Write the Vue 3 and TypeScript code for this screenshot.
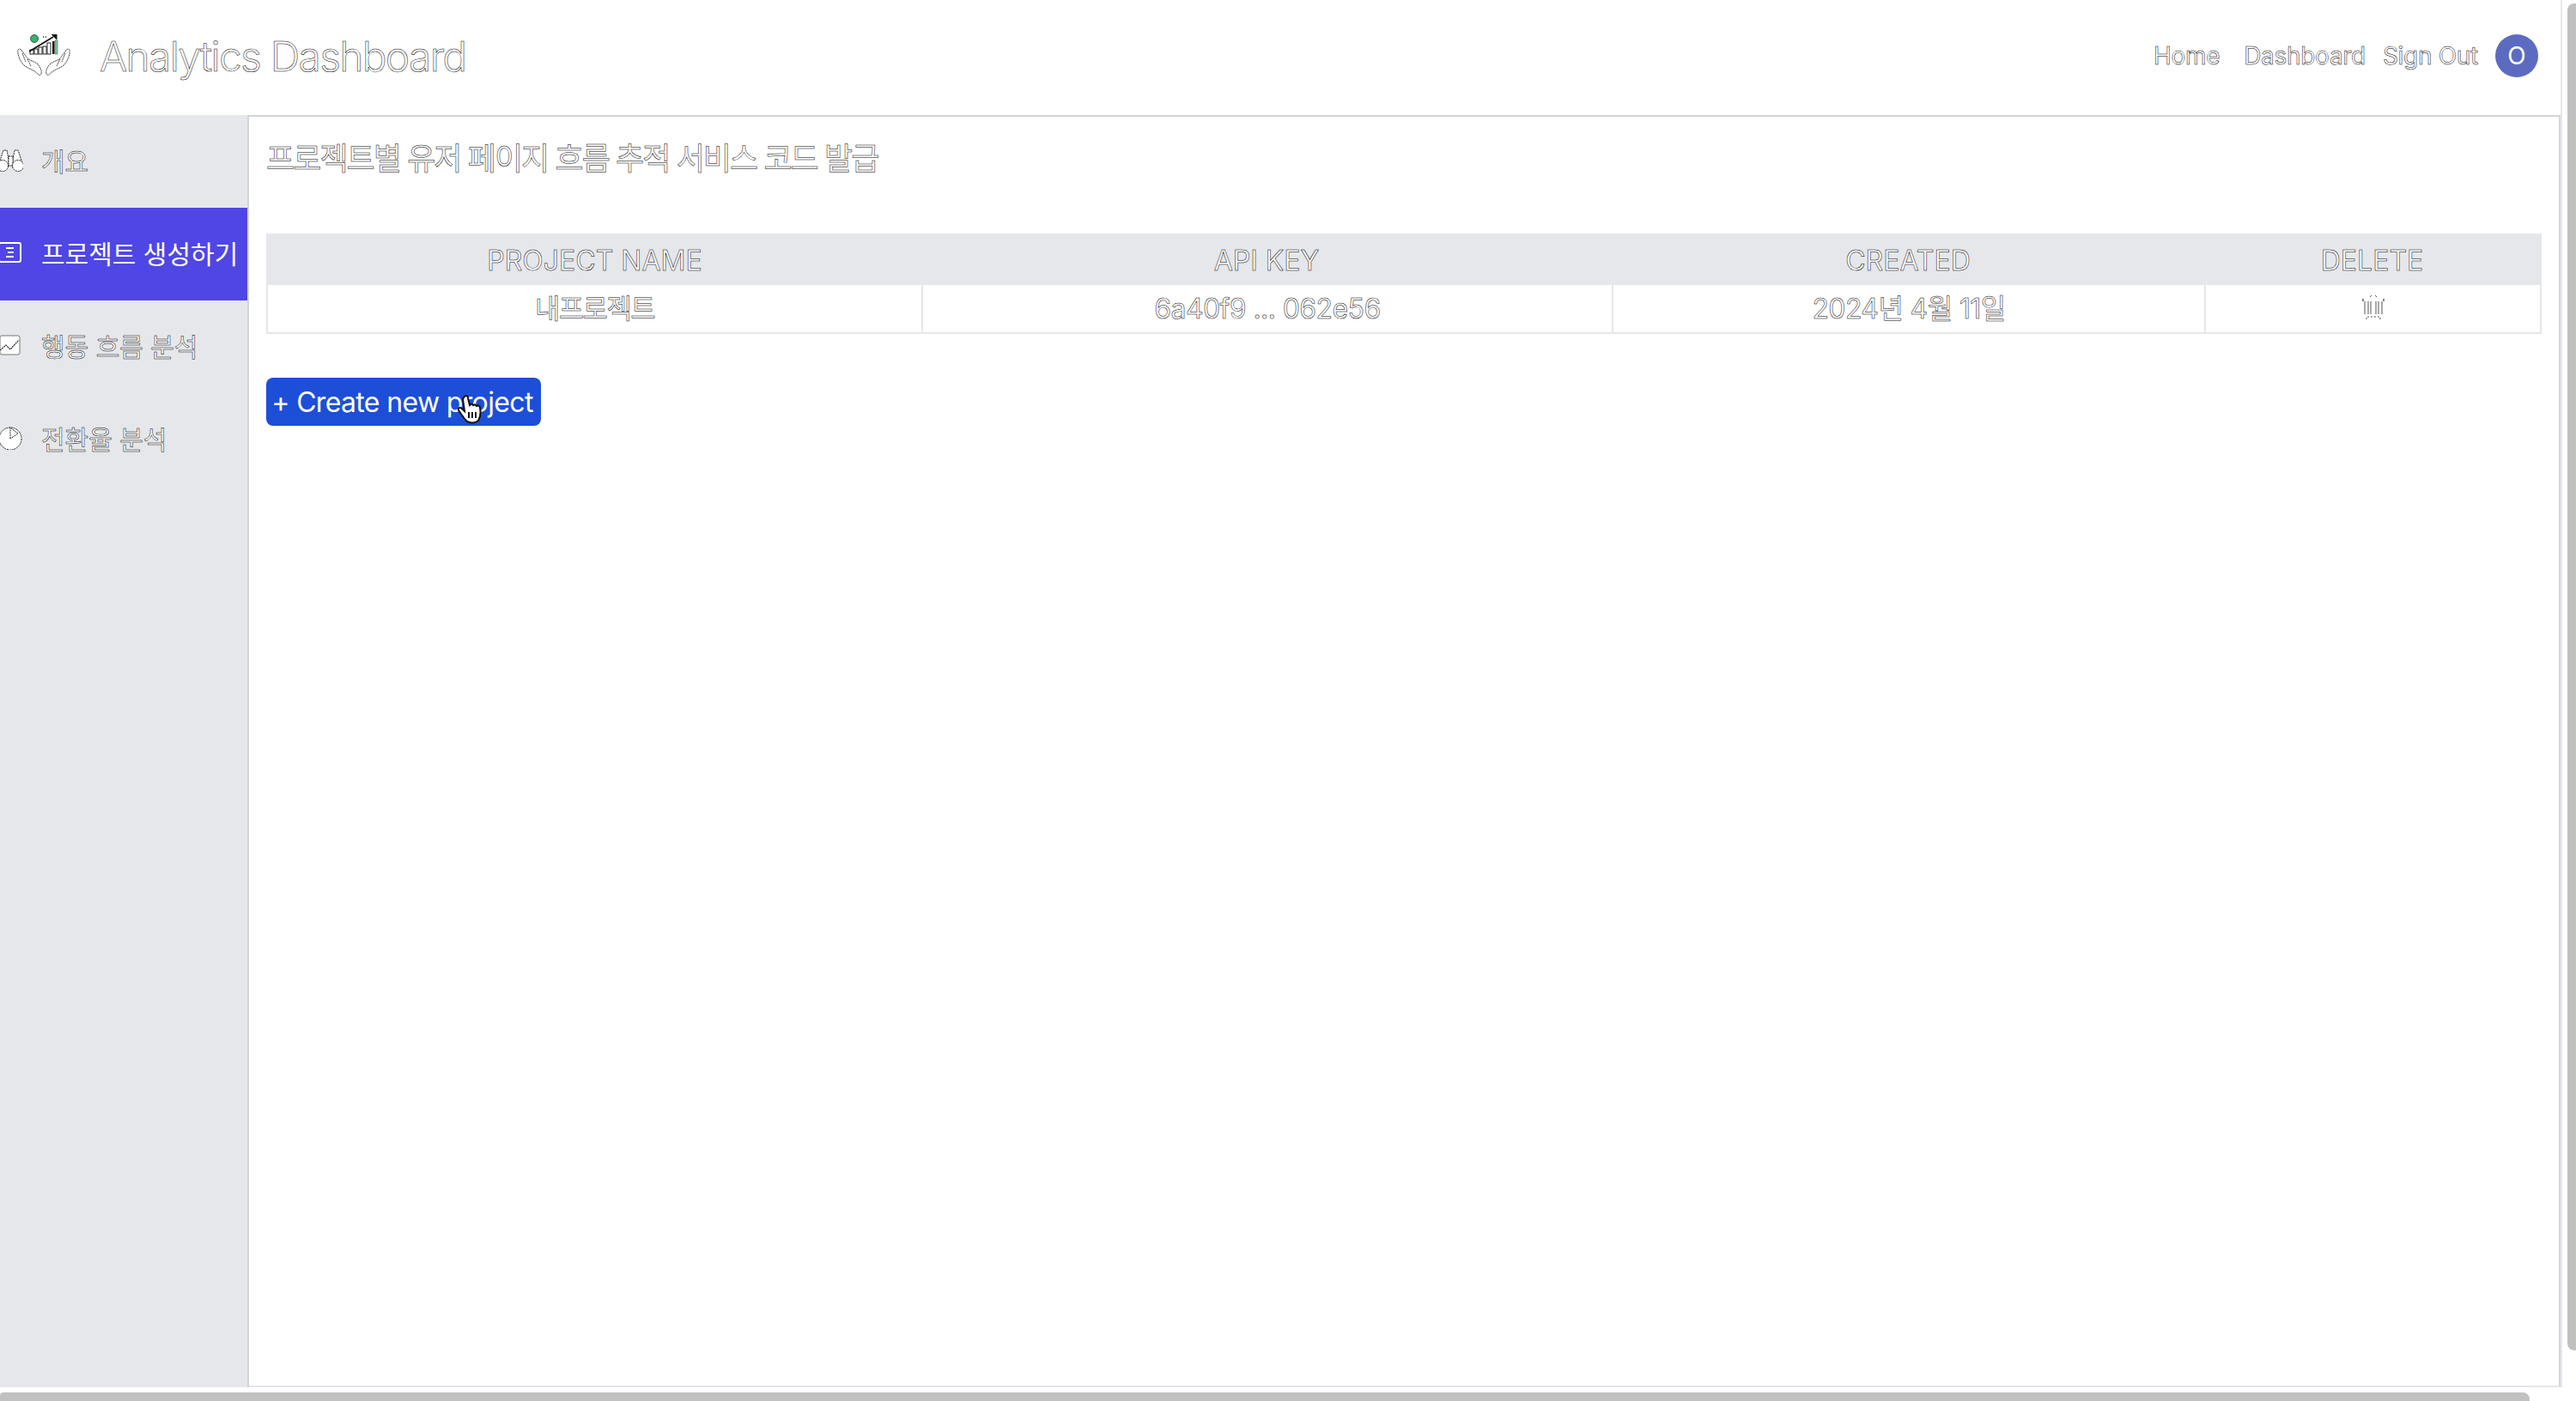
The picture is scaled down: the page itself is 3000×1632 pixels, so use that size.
<script setup lang="ts">
interface NavItem {
  label: string
  icon: string
  active?: boolean
}

const topLinks = ['Home', 'Dashboard', 'Sign Out']

const navItems: NavItem[] = [
  { label: '개요', icon: 'binoculars' },
  { label: '프로젝트 생성하기', icon: 'list', active: true },
  { label: '행동 흐름 분석', icon: 'chart' },
  { label: '전환율 분석', icon: 'pie' }
]

const columns = ['Project Name', 'API Key', 'Created', 'Delete']
</script>

<template>
  <div class="shell">
    <header class="topbar">
      <div class="brand">
        <svg class="logo" viewBox="0 0 62 50" width="62" height="50">
          <circle cx="20" cy="5" r="4.5" fill="#35b56f" stroke="#222" stroke-width="0.7" />
          <path d="M30 3h1M33 3h1" stroke="#222" stroke-width="1.4" />
          <g fill="#fff" stroke="#111" stroke-width="0.9">
            <rect x="15" y="18" width="4" height="5" />
            <rect x="20" y="17" width="4" height="6" />
            <rect x="25" y="15" width="4" height="8" />
            <rect x="30" y="14" width="4" height="9" />
            <rect x="35" y="10" width="4" height="13" />
            <path d="M14 20L42 3" fill="none" stroke-width="1.8" />
            <path d="M40 0h6v6z" fill="#111" />
          </g>
          <path d="M41 8h2.5v15H41z" fill="#111" />
          <path d="M44 7h3v16h-3z" fill="#7fcf9e" stroke="#333" stroke-width="0.5" />
          <g fill="#fff" stroke="#111" stroke-width="0.9" stroke-dasharray="1.6 0.8" transform="translate(0 -2)">
            <path d="M1 20c2-2 4 0 5 2l7 9c3 2 9 3 12 7 2 3 4 6 3 10-1 2-3 2-4 0-4-4-10-6-15-9C4 35 0 26 1 20z" />
            <path d="M61 20c-2-2-4 0-5 2l-7 9c-3 2-9 3-12 7-2 3-4 6-3 10 1 2 3 2 4 0 4-4 10-6 15-9 5-4 9-13 8-19z" />
            <path d="M6 24l4 10M12 31l4 8M56 24l-4 10M50 31l-4 8" fill="none" />
          </g>
        </svg>
        <span class="brand-name">Analytics Dashboard</span>
      </div>
      <nav class="top-links">
        <a v-for="link in topLinks" :key="link" class="top-link">{{ link }}</a>
        <div class="avatar">O</div>
      </nav>
    </header>

    <div class="body">
      <aside class="sidebar">
        <div
          v-for="item in navItems"
          :key="item.label"
          class="side-item"
          :class="{ active: item.active }"
        >
          <svg class="side-icon" viewBox="0 0 28 28" width="28" height="28">
            <g v-if="item.icon === 'binoculars'" fill="#fff" stroke="#222" stroke-width="1" stroke-dasharray="2 0.8">
              <path d="M0 18L5 3h4l2 10v9H0z" />
              <path d="M16 22v-9l2-10h4l5 15v4z" />
              <path d="M11 10h5v11h-5z" />
              <circle cx="4" cy="21" r="6.5" />
              <circle cx="22" cy="21" r="6.5" />
            </g>
            <g v-else-if="item.icon === 'list'" fill="none" stroke="#fff" stroke-width="2">
              <rect x="0" y="3" width="25" height="22" rx="2" />
              <path d="M8 9h9M10 14h7M8 19h9" />
            </g>
            <g v-else-if="item.icon === 'chart'">
              <rect x="1" y="3" width="23" height="22" rx="2" fill="#fff" stroke="#777" stroke-width="1" />
              <path d="M1 20l7-6 5 5 10-11" fill="none" stroke="#222" stroke-width="1.2" stroke-dasharray="2 0.8" />
            </g>
            <g v-else fill="#fff" stroke="#222" stroke-width="1" stroke-dasharray="2 0.8">
              <circle cx="13" cy="15" r="13" />
              <path d="M13 15V2l9 7z" />
            </g>
          </svg>
          <span class="side-label">{{ item.label }}</span>
        </div>
      </aside>

      <main class="content">
        <h1 class="page-title">프로젝트별 유저 페이지 흐름 추적 서비스 코드 발급</h1>

        <table class="project-table">
          <colgroup>
            <col class="col-name" />
            <col class="col-key" />
            <col class="col-created" />
            <col class="col-delete" />
          </colgroup>
          <thead>
            <tr>
              <th v-for="col in columns" :key="col">{{ col }}</th>
            </tr>
          </thead>
          <tbody>
            <tr>
              <td class="name-cell">내프로젝트</td>
              <td>6a40f9 ... 062e56</td>
              <td class="date-cell">2024년 4월 11일</td>
              <td>
                <svg class="trash" viewBox="0 0 26 30" width="26" height="30">
                  <g fill="none" stroke="#555" stroke-width="1">
                    <path d="M9 3l2-2M17 3l-2-2" />
                    <path d="M1 5v3M25 5v3" stroke-width="1.4" />
                    <path d="M3 8v15M7 8v15M10 8v15M16 8v15M19 8v15M23 8v15" />
                    <path d="M5 29v-3h16v3" stroke-dasharray="2 2" />
                  </g>
                </svg>
              </td>
            </tr>
          </tbody>
        </table>

        <div class="actions">
          <button class="create-btn">+ Create new project</button>
          <svg class="hand-cursor" viewBox="0 0 30 34" width="30" height="34">
            <path
              d="M8 2c2-2 4-1 4 2l2 8c2-2 3-1 4 0 2-1 3-1 4 1 2-1 4 0 4 2 1 5 1 10-2 15-4 3-9 3-13 1C7 27 4 22 1 18c-1-3 2-4 4-2l3 3L6 5c0-1 1-2 2-3z"
              fill="#fff"
              stroke="#111"
              stroke-width="2"
            />
            <path d="M13 20v7M17 20v7M21 20v7" stroke="#111" stroke-width="2" />
          </svg>
        </div>
      </main>
    </div>

    <div class="scroll-v"></div>
    <div class="scroll-h"></div>
  </div>
</template>

<style>
html,
body {
  margin: 0;
  background: #fff;
  overflow: hidden;
}
</style>

<style scoped>
.shell {
  width: 2984px;
  height: 1616px;
  box-sizing: border-box;
  border-right: 2px solid #e5e7eb;
  display: flex;
  flex-direction: column;
  font-family: Inter, "Noto Sans CJK KR", sans-serif;
  color: #fff;
  -webkit-text-stroke: 0.5px #000;
}

/* 상단 바 */
.topbar {
  height: 134px;
  flex: none;
  display: flex;
  align-items: center;
  justify-content: space-between;
  padding: 0 26px 4px 20px;
  box-sizing: border-box;
}

.brand {
  display: flex;
  align-items: center;
  gap: 34px;
}

.brand-name {
  font-size: 48px;
  font-weight: 300;
  letter-spacing: -1.75px;
}

.top-links {
  display: flex;
  align-items: center;
}

.top-link {
  font-size: 28px;
  letter-spacing: -0.3px;
  margin-right: 20px;
}

.top-link:first-child {
  margin-right: 28px;
}

.avatar {
  width: 50px;
  height: 50px;
  border-radius: 50%;
  background: #5c6bc0;
  display: flex;
  align-items: center;
  justify-content: center;
  font-size: 28px;
  -webkit-text-stroke: 0;
}

/* 본문 */
.body {
  flex: 1;
  display: flex;
  min-height: 0;
}

.sidebar {
  width: 290px;
  flex: none;
  box-sizing: border-box;
  background: #e5e7eb;
  border-right: 2px solid #d1d5db;
  overflow: hidden;
}

.side-item {
  height: 108px;
  display: flex;
  align-items: center;
  gap: 21px;
  box-sizing: border-box;
  padding-bottom: 4px;
}

.side-item.active {
  background: #4f46e5;
  -webkit-text-stroke: 0;
}

.side-icon {
  margin-left: -1px;
  flex: none;
}

.side-label {
  font-size: 30px;
  white-space: nowrap;
}

.content {
  flex: 1;
  min-width: 0;
  box-sizing: border-box;
  border-top: 2px solid #d1d5db;
  border-right: 2px solid #d1d5db;
  border-bottom: 2px solid #e5e7eb;
  padding: 26px 20px 0;
}

.page-title {
  margin: 0 0 64px;
  font-size: 36px;
  font-weight: 400;
  line-height: 46px;
  letter-spacing: -1.93px;
}

/* 표 */
.project-table {
  width: 2650px;
  table-layout: fixed;
  border-collapse: separate;
  border-spacing: 0;
  border: 2px solid #e5e7eb;
}

.col-name {
  width: 761px;
}

.col-key {
  width: 804px;
}

.col-created {
  width: 690px;
}

.col-delete {
  width: 391px;
}

.project-table th {
  height: 58px;
  padding: 0;
  background: #e5e7eb;
  font-size: 32px;
  font-weight: 400;
  text-transform: uppercase;
}

.project-table td {
  height: 55px;
  padding: 0;
  text-align: center;
  font-size: 32px;
  letter-spacing: -0.6px;
}

.project-table td.name-cell {
  letter-spacing: -1.6px;
  line-height: 38px;
  vertical-align: top;
  padding-top: 9px;
  height: 46px;
}

.project-table td.date-cell {
  line-height: 38px;
  vertical-align: top;
  padding-top: 9px;
  height: 46px;
}

.project-table td + td {
  border-left: 2px solid #e5e7eb;
}

.trash {
  display: block;
  margin: -4px auto 0;
}

/* 버튼 */
.actions {
  position: relative;
  margin-top: 51px;
  width: 320px;
}

.create-btn {
  display: block;
  width: 320px;
  height: 56px;
  padding: 0 3px 0 0;
  border: 0;
  border-radius: 8px;
  background: #1d4ed8;
  color: #fff;
  font-family: inherit;
  font-size: 32px;
  letter-spacing: -0.65px;
  -webkit-text-stroke: 0;
}

.hand-cursor {
  position: absolute;
  left: 223px;
  top: 20px;
}

.scroll-v {
  position: fixed;
  top: 4px;
  right: 0;
  width: 10px;
  height: 1569px;
  border-radius: 8px 0 0 8px;
  background: #c1c1c1;
}

.scroll-h {
  position: fixed;
  left: 0;
  bottom: 0;
  width: 2946px;
  height: 10px;
  border-radius: 4px 8px 0 0;
  background: #c1c1c1;
}
</style>
